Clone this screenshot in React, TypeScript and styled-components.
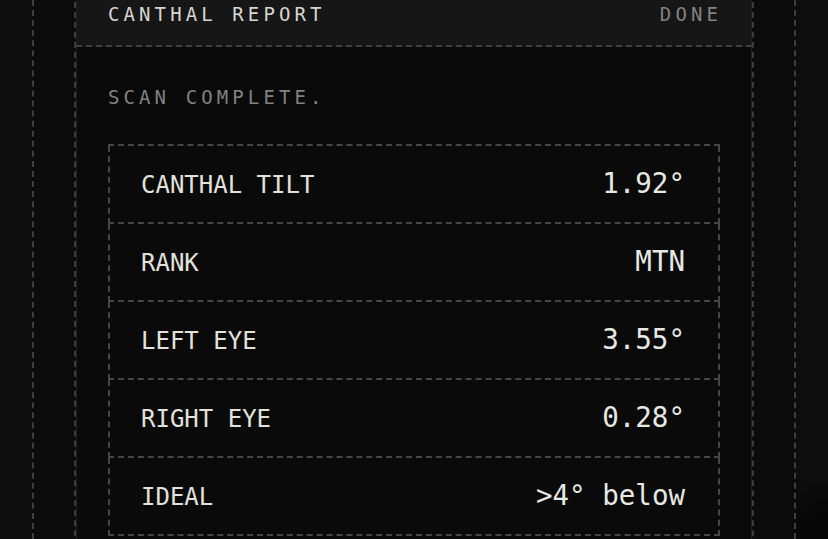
import React from "react";
import styled, { createGlobalStyle } from "styled-components";

const GlobalStyle = createGlobalStyle`
  html, body {
    margin: 0;
    padding: 0;
    background: #0c0c0c;
    overflow: hidden;
  }
  body {
    font-family: "DejaVu Sans Mono", "Liberation Mono", monospace;
    background:
      radial-gradient(circle at 830px 545px, #060606 0, #080808 40px, rgba(12, 12, 12, 0) 70px),
      #0d0d0d;
  }
`;

// dashed rails either side of the report column
const Frame = styled.div`
  margin-left: 32px;
  width: 764px;
  height: 539px;
  box-sizing: border-box;
  padding: 0 40px;
  border-left: 2px dashed #3e3e3e;
  border-right: 2px dashed #3e3e3e;
  background: #0b0b0b;
  overflow: hidden;
`;

const Card = styled.section`
  margin-top: -18px;
  border: 2px dashed #3c3c3c;
  box-shadow: inset 0 0 0 1px #202020;
  background: #0a0a0a;
  min-height: 600px;
`;

const Header = styled.header`
  display: flex;
  justify-content: space-between;
  align-items: center;
  padding: 18px 32px 19px;
  background: #161616;
  border-bottom: 2px dashed #3f3f3f;
  box-shadow: inset 1px 0 0 #202020, inset -1px 0 0 #202020;
`;

const Caption = styled.span<{ dim?: boolean }>`
  font-size: 19px;
  line-height: 24px;
  letter-spacing: 4.1px;
  text-transform: uppercase;
  color: ${(p) => (p.dim ? "#828282" : "#d6d6d2")};
`;

const Status = styled(Caption)`
  margin-right: -2px;
`;

const Body = styled.div`
  padding: 38px 32px 0;
`;

const Note = styled(Caption)`
  display: block;
  margin-bottom: 35px;
`;

const Rows = styled.div`
  border-top: 2px dashed #464646;
`;

const Row = styled.div`
  display: flex;
  justify-content: space-between;
  align-items: baseline;
  box-sizing: border-box;
  height: 78px;
  padding: 21px 33px 0 32px;
  border: 2px dashed #464646;
  border-top: none;
`;

const Label = styled.span`
  font-size: 24px;
  line-height: 32px;
  margin-left: -1px;
  color: #e2e2db;
`;

const Value = styled.span`
  font-size: 27.5px;
  line-height: 32px;
  color: #e8e8e2;
`;

const results: [string, string][] = [
  ["CANTHAL TILT", "1.92°"],
  ["RANK", "MTN"],
  ["LEFT EYE", "3.55°"],
  ["RIGHT EYE", "0.28°"],
  ["IDEAL", ">4° below"],
];

export default function App() {
  return (
    <>
      <GlobalStyle />
      <Frame>
        <Card>
          <Header>
            <Caption>Canthal Report</Caption>
            <Status dim>Done</Status>
          </Header>
          <Body>
            <Note dim>Scan complete.</Note>
            <Rows>
              {results.map(([label, value]) => (
                <Row key={label}>
                  <Label>{label}</Label>
                  <Value>{value}</Value>
                </Row>
              ))}
            </Rows>
          </Body>
        </Card>
      </Frame>
    </>
  );
}
